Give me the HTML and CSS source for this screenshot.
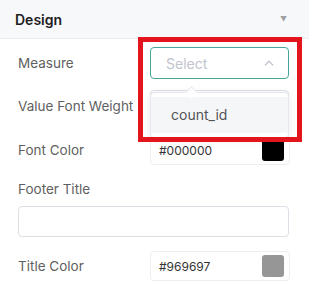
FILE: index.html
```html
<!DOCTYPE html>
<html lang="en">
<head>
    <meta charset="UTF-8">
    <meta name="viewport" content="width=device-width, initial-scale=1.0">
    <title>Design</title>
    <link rel="stylesheet" href="styles.css">
</head>
<body>
    <div class="panel">
        <div class="panel-header">
            <span class="panel-title">Design</span>
            <span class="caret">&#9660;</span>
        </div>
        <div class="panel-body">
            <div class="form-row row-measure">
                <label>Measure</label>
                <div class="select focused">
                    <span class="placeholder">Select</span>
                    <svg class="chevron" width="10" height="6" viewBox="0 0 10 6"><path d="M1 5.2 L5 1.2 L9 5.2" fill="none" stroke="#c0c4cc" stroke-width="1.3"/></svg>
                </div>
            </div>
            <div class="form-row row-weight">
                <label>Value Font Weight</label>
                <div class="select"></div>
            </div>
            <div class="form-row row-font-color">
                <label>Font Color</label>
                <div class="color-input">
                    <span class="color-value">#000000</span>
                    <span class="swatch swatch-black"></span>
                </div>
            </div>
            <div class="form-block">
                <label>Footer Title</label>
                <div class="text-input"></div>
            </div>
            <div class="form-row row-title-color">
                <label>Title Color</label>
                <div class="color-input">
                    <span class="color-value">#969697</span>
                    <span class="swatch swatch-gray"></span>
                </div>
            </div>
        </div>

        <div class="dropdown">
            <span class="dropdown-arrow"></span>
            <div class="dropdown-item">count_id</div>
        </div>
        <div class="highlight"></div>
    </div>
</body>
</html>
```

FILE: styles.css
```css
body {
    margin: 0;
    font-family: Inter, "Noto Sans", sans-serif;
    background: white;
}
.panel {
    position: relative;
    width: 309px;
    height: 294px;
    overflow: hidden;
}
.panel-header {
    height: 38px;
    padding: 0 22px 0 15px;
    display: flex;
    align-items: center;
    justify-content: space-between;
    background-color: #f7f8fa;
    border-bottom: 1px solid #ebedf0;
}
.panel-title {
    font-size: 14px;
    font-weight: 600;
    color: #1d1d1f;
}
.caret {
    font-size: 7px;
    color: #a0a0a0;
}
.panel-body {
    padding: 8px 19px 0 18px;
}
label {
    font-size: 13.5px;
    color: #5f5f62;
}
.form-row {
    display: flex;
    align-items: center;
    height: 32px;
}
.form-row label {
    width: 132px;
    flex-shrink: 0;
    white-space: nowrap;
}
.row-weight {
    margin-top: 11px;
}
.row-font-color {
    margin-top: 13px;
    height: 30px;
}
.row-title-color {
    margin-top: 14px;
    height: 30px;
}
.select {
    box-sizing: border-box;
    width: 139px;
    height: 32px;
    border: 1px solid #dcdfe6;
    border-radius: 4px;
    padding: 0 14px 0 15px;
    display: flex;
    align-items: center;
    justify-content: space-between;
}
.select.focused {
    border-color: #46a59b;
}
.placeholder {
    font-size: 14px;
    color: #c0c4cc;
}
.color-input {
    box-sizing: border-box;
    width: 142px;
    height: 30px;
    border: 1px solid #eeeeef;
    border-radius: 4px;
    padding: 0 5px 0 8px;
    display: flex;
    align-items: center;
    justify-content: space-between;
}
.color-value {
    font-size: 12px;
    color: #333;
}
.swatch {
    width: 22px;
    height: 22px;
    border-radius: 3px;
}
.swatch-black {
    background: #000000;
}
.swatch-gray {
    background: #969697;
}
.form-block {
    margin-top: 14px;
}
.form-block label {
    display: block;
    line-height: 20px;
}
.text-input {
    box-sizing: border-box;
    margin-top: 7px;
    width: 271px;
    height: 31px;
    border: 1px solid #dcdfe6;
    border-radius: 4px;
}
.dropdown {
    position: absolute;
    left: 150px;
    top: 92px;
    box-sizing: border-box;
    width: 139px;
    height: 46px;
    padding: 4px 0;
    background: white;
    border: 1px solid #e4e7ed;
    border-radius: 4px;
    box-shadow: 0 2px 10px rgba(0,0,0,0.08);
}
.dropdown-arrow {
    position: absolute;
    left: 36px;
    top: -5px;
    width: 8px;
    height: 8px;
    background: white;
    border-left: 1px solid #e4e7ed;
    border-top: 1px solid #e4e7ed;
    transform: rotate(45deg);
}
.dropdown-item {
    height: 36px;
    line-height: 36px;
    padding-left: 20px;
    font-size: 14px;
    color: #545458;
    background: #f5f6f8;
}
.highlight {
    position: absolute;
    left: 138px;
    top: 37px;
    box-sizing: border-box;
    width: 164px;
    height: 105px;
    border: 5px solid #e3141e;
}
```
